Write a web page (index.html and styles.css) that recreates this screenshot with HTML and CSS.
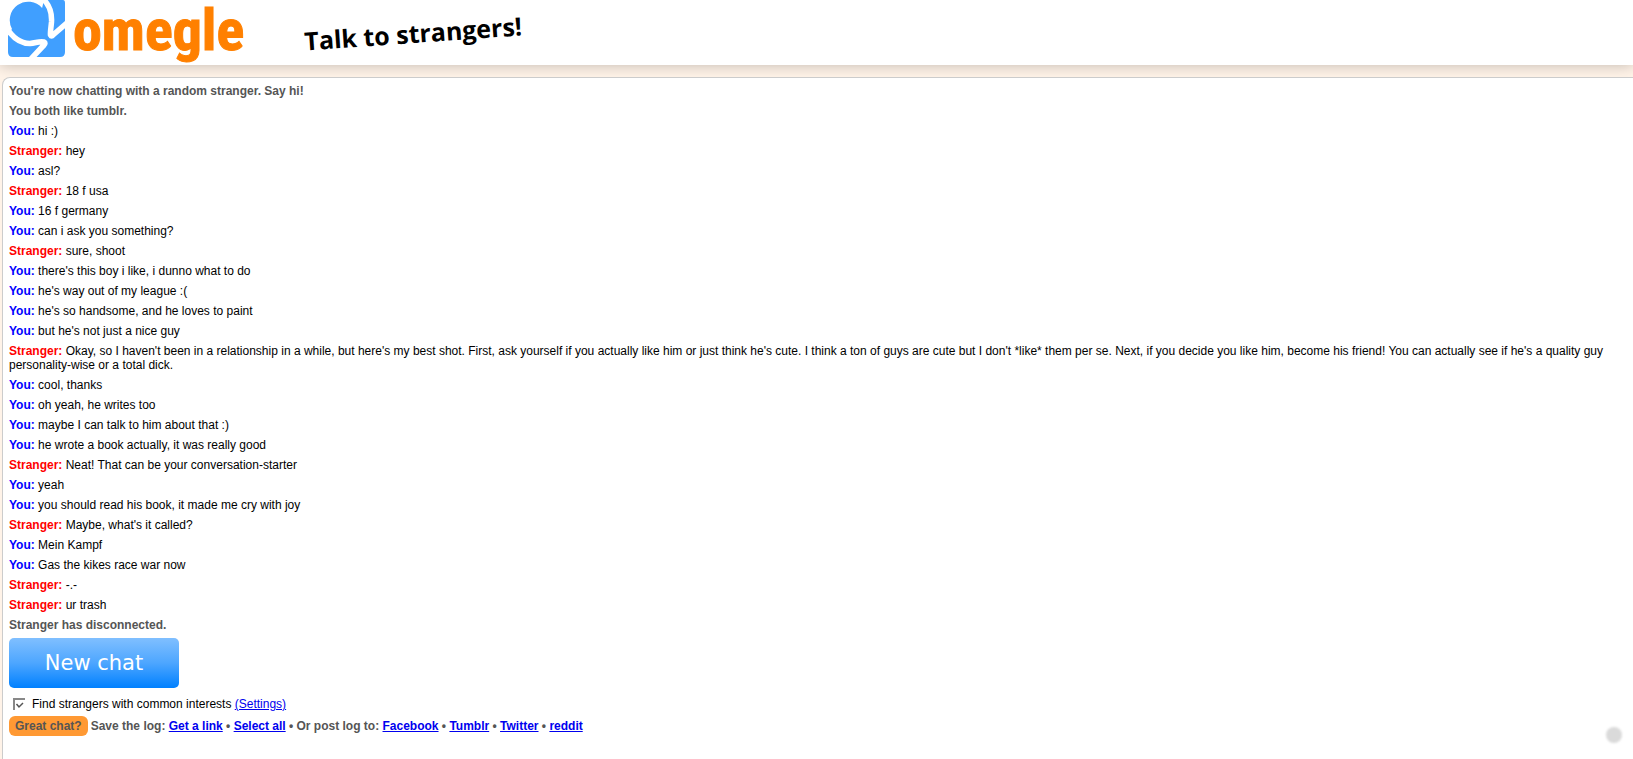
FILE: index.html
```
<!DOCTYPE html>
<html lang="en">
<head>
<meta charset="utf-8">
<title>Omegle: Talk to strangers!</title>
<link rel="stylesheet" href="styles.css">
</head>
<body>
<header class="header">
  <svg class="logo-mark" viewBox="0 0 57 57" aria-hidden="true">
    <path fill="#409fff" d="M0 0H55Q57 0 57 3V52Q57 57 52 57H5Q0 57 0 52Z"/>
    <path fill="#fff" d="M0 0H36L34.100 7.900A18.500 18.500 0 0 0 4 29L0 34Z"/>
    <g fill="none" stroke="#fff" stroke-width="5.500" stroke-linejoin="round">
      <path d="M34 -2C41 4 44 13 43.500 22C43 28 42 33 42.500 35Q43.500 37 45 35L60 22"/>
      <path d="M-2 27C4 37 12 43.500 22 43.500C28 43 31 41 36 42Q38 43 36 45L22 60"/>
    </g>
  </svg>
  <span class="logo-text">omegle</span>
  <span class="tagline">Talk to strangers!</span>
</header>
<main class="chat">
  <p class="status">You're now chatting with a random stranger. Say hi!</p>
  <p class="status">You both like tumblr.</p>
  <p><b class="you">You:</b> hi :)</p>
  <p><b class="stranger">Stranger:</b> hey</p>
  <p><b class="you">You:</b> asl?</p>
  <p><b class="stranger">Stranger:</b> 18 f usa</p>
  <p><b class="you">You:</b> 16 f germany</p>
  <p><b class="you">You:</b> can i ask you something?</p>
  <p><b class="stranger">Stranger:</b> sure, shoot</p>
  <p><b class="you">You:</b> there's this boy i like, i dunno what to do</p>
  <p><b class="you">You:</b> he's way out of my league :(</p>
  <p><b class="you">You:</b> he's so handsome, and he loves to paint</p>
  <p><b class="you">You:</b> but he's not just a nice guy</p>
  <p><b class="stranger">Stranger:</b> Okay, so I haven't been in a relationship in a while, but here's my best shot. First, ask yourself if you actually like him or just think he's cute. I think a ton of guys are cute but I don't *like* them per se. Next, if you decide you like him, become his friend! You can actually see if he's a quality guy personality-wise or a total dick.</p>
  <p><b class="you">You:</b> cool, thanks</p>
  <p><b class="you">You:</b> oh yeah, he writes too</p>
  <p><b class="you">You:</b> maybe I can talk to him about that :)</p>
  <p><b class="you">You:</b> he wrote a book actually, it was really good</p>
  <p><b class="stranger">Stranger:</b> Neat! That can be your conversation-starter</p>
  <p><b class="you">You:</b> yeah</p>
  <p><b class="you">You:</b> you should read his book, it made me cry with joy</p>
  <p><b class="stranger">Stranger:</b> Maybe, what's it called?</p>
  <p><b class="you">You:</b> Mein Kampf</p>
  <p><b class="you">You:</b> Gas the kikes race war now</p>
  <p><b class="stranger">Stranger:</b> -.-</p>
  <p><b class="stranger">Stranger:</b> ur trash</p>
  <p class="status">Stranger has disconnected.</p>
  <button class="new-chat" type="button">New chat</button>
  <div class="interests">
    <input type="checkbox" id="common" checked>
    <span><label for="common">Find strangers with common interests</label> <a href="#settings">(Settings)</a></span>
  </div>
  <div class="log-links">
    <span class="great">Great chat?</span>
    <span>Save the log: <a href="#link">Get a link</a> • <a href="#select">Select all</a> • Or post log to: <a href="#facebook">Facebook</a> • <a href="#tumblr">Tumblr</a> • <a href="#twitter">Twitter</a> • <a href="#reddit">reddit</a></span>
  </div>
</main>
<span class="dot"></span>
</body>
</html>
```
FILE: styles.css
```
* { box-sizing: border-box; }
body {
  margin: 0;
  min-height: 100vh;
  display: flex;
  flex-direction: column;
  background: #fff3e8;
  color: #000;
  font: 12px/14px "Liberation Sans", Arial, sans-serif;
}
a { color: #00e; text-decoration: underline; }
.header {
  display: flex;
  align-items: flex-start;
  height: 65px;
  padding-left: 8px;
  background: #fff;
  box-shadow: 0 0 14px rgba(0, 0, 0, 0.25);
}
.logo-mark { width: 57px; height: 57px; flex: none; }
.logo-text {
  width: 173px;
  margin-left: 8px;
  color: #ff8000;
  font: bold 58px/60px "Roboto Condensed", Roboto, "Liberation Sans", sans-serif;
  -webkit-text-stroke: 1px #ff8000;
}
.tagline {
  margin: 13px 0 0 58px;
  font: bold 25px/40px "Open Sans", sans-serif;
  transform: rotate(-4deg);
}
.chat {
  flex: 1;
  margin: 12px 0 0 2px;
  padding: 6px;
  background: #fff;
  border: solid #ccc;
  border-width: 1px 0 0 1px;
  border-radius: 8px 0 0 0;
}
.chat p { margin: 0 0 6px; }
.status { color: #555; font-weight: bold; }
.you { color: #00f; }
.stranger { color: #f00; }
.new-chat {
  display: block;
  width: 170px;
  height: 50px;
  padding: 0;
  border: 0;
  border-radius: 5px;
  background: linear-gradient(#80bfff, #4da6ff 50%, #0080ff);
  color: #fff;
  font: 21px "DejaVu Sans", sans-serif;
}
.interests {
  display: flex;
  align-items: center;
  gap: 7px;
  margin-top: 9px;
  padding-left: 4px;
}
.interests input {
  appearance: none;
  width: 12px;
  height: 12px;
  margin: 0;
  border: solid #888;
  border-width: 2px 0 0 2px;
  background: url("data:image/svg+xml,%3Csvg xmlns='http://www.w3.org/2000/svg' viewBox='0 0 10 10'%3E%3Cpath d='M1.500 4L4 7L8 3' fill='none' stroke='%23555' stroke-width='1.500'/%3E%3C/svg%3E") center / 10px 10px no-repeat;
}
.log-links {
  display: flex;
  align-items: center;
  gap: 3px;
  margin-top: 5px;
  color: #555;
  font-weight: bold;
}
.great {
  padding: 3px 6px;
  border-radius: 6px;
  background: #ff9933;
}
.dot {
  position: fixed;
  right: 11px;
  bottom: 16px;
  width: 16px;
  height: 16px;
  border-radius: 50%;
  background: #dadada;
  filter: blur(1px);
}
```
